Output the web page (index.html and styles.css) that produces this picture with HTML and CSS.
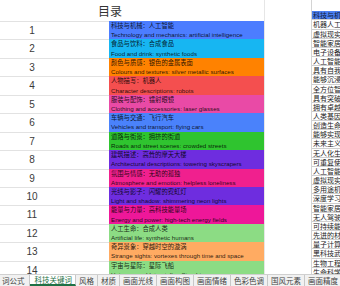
FILE: index.html
```html
<!DOCTYPE html>
<html lang="zh-CN">
<head>
  <meta charset="UTF-8" />
  <title>目录</title>
  <link rel="stylesheet" href="styles.css">
</head>
<body>

  <div class="hoja">
    <!-- Tabla principal -->
    <div class="principal">
      <div class="titulo">目录</div>
      <div class="fila"><div class="num">1</div><div class="celda c1"><span>科技与机械：人工智能</span><span>Technology and mechanics: artificial intelligence</span></div></div>
      <div class="fila"><div class="num">2</div><div class="celda c2"><span>食品与饮料：合成食品</span><span>Food and drink: synthetic foods</span></div></div>
      <div class="fila"><div class="num">3</div><div class="celda c3"><span>颜色与质感：银色的金属表面</span><span>Colours and textures: silver metallic surfaces</span></div></div>
      <div class="fila"><div class="num">4</div><div class="celda c4"><span>人物描写：机器人</span><span>Character descriptions: robots</span></div></div>
      <div class="fila"><div class="num">5</div><div class="celda c5"><span>服装与配饰：镭射眼镜</span><span>Clothing and accessories: laser glasses</span></div></div>
      <div class="fila"><div class="num">6</div><div class="celda c6"><span>车辆与交通：飞行汽车</span><span>Vehicles and transport: flying cars</span></div></div>
      <div class="fila"><div class="num">7</div><div class="celda c7"><span>道路与街景：拥挤的街道</span><span>Roads and street scenes: crowded streets</span></div></div>
      <div class="fila"><div class="num">8</div><div class="celda c8"><span>建筑描述：高耸的摩天大楼</span><span>Architectural descriptions: towering skyscrapers</span></div></div>
      <div class="fila"><div class="num">9</div><div class="celda c9"><span>氛围与情感：无助的孤独</span><span>Atmosphere and emotion: helpless loneliness</span></div></div>
      <div class="fila"><div class="num">10</div><div class="celda c8"><span>光线与影子：闪耀的霓虹灯</span><span>Light and shadow: shimmering neon lights</span></div></div>
      <div class="fila"><div class="num">11</div><div class="celda c11"><span>能量与力量：高科技能量场</span><span>Energy and power: high-tech energy fields</span></div></div>
      <div class="fila"><div class="num">12</div><div class="celda c12"><span>人工生命：合成人类</span><span>Artificial life: synthetic humans</span></div></div>
      <div class="fila"><div class="num">13</div><div class="celda c13"><span>奇异景象：穿越时空的漩涡</span><span>Strange sights: vortexes through time and space</span></div></div>
      <div class="fila"><div class="num">14</div><div class="celda c12"><span>宇宙与星际：星际飞船</span><span>Universe and Interstellar: Starships</span></div></div>
    </div>

    <div class="hueco"></div>

    <!-- Lista lateral -->
    <div class="lateral">
      <div class="item cabecera">科技与机械</div>
      <div class="item">机器人工作</div>
      <div class="item">虚拟现实技</div>
      <div class="item">智能家居系</div>
      <div class="item">电子设备和</div>
      <div class="item">人工智能助</div>
      <div class="item">具有自我意</div>
      <div class="item">能够沉浸式</div>
      <div class="item">全方位智能</div>
      <div class="item">具有突破性</div>
      <div class="item">拥有卓越的</div>
      <div class="item">人类基因改</div>
      <div class="item">创造生命的</div>
      <div class="item">能够实现的</div>
      <div class="item">未来主义的</div>
      <div class="item">无人化生产</div>
      <div class="item">可重复使用</div>
      <div class="item">人工智能的</div>
      <div class="item">虚拟现实的</div>
      <div class="item">多用途机器</div>
      <div class="item">深度学习的</div>
      <div class="item">智能家居的</div>
      <div class="item">无人驾驶的</div>
      <div class="item">可持续能源</div>
      <div class="item">先进的材料</div>
      <div class="item">量子计算机</div>
      <div class="item">黑科技武器</div>
      <div class="item">生物工程的</div>
      <div class="item">生命科学的</div>
    </div>
  </div>

  <!-- Pestañas -->
  <div class="pestanas">
    <div class="tab primera">词公式</div>
    <div class="tab active">科技关键词</div>
    <div class="tab">风格</div>
    <div class="tab">材质</div>
    <div class="tab">画面光线</div>
    <div class="tab">画面构图</div>
    <div class="tab">画面情绪</div>
    <div class="tab">色彩色调</div>
    <div class="tab">国风元素</div>
    <div class="tab">画面精度</div>
    <div class="tab">画面</div>
  </div>

</body>
</html>
```

FILE: styles.css
```css
body {
  margin: 0;
  width: 340px;
  height: 286px;
  overflow: hidden;
  background: white;
  font-family: "Liberation Sans", "Noto Sans CJK SC", sans-serif;
  color: #333;
}

.hoja {
  display: flex;
  height: 274px;
  overflow: hidden;
}

.principal {
  width: 264px;
  flex: none;
}

.titulo {
  height: 21px;
  width: 220px;
  text-align: center;
  font-family: "Noto Sans CJK SC", sans-serif;
  font-size: 12px;
  line-height: 21px;
}

.fila {
  display: flex;
  height: 18.45px;
}

.num {
  width: 109px;
  box-sizing: border-box;
  padding-right: 45px;
  border-top: 1px solid #e2e2e2;
  text-align: center;
  font-size: 10px;
  line-height: 18px;
  color: #3a3a3a;
}

.celda {
  width: 155px;
  padding-left: 2px;
  box-sizing: border-box;
  display: flex;
  flex-direction: column;
  font-size: 6.2px;
  color: rgba(0, 0, 0, 0.85);
  white-space: nowrap;
  overflow: hidden;
}
.celda span {
  height: 9.2px;
  line-height: 9.2px;
}
.celda span:first-child {
  font-family: "Noto Sans CJK SC", sans-serif;
  font-size: 6.3px;
}

.c1 { background-color: #4c7dff; }
.c2 { background-color: #17b6f2; }
.c3 { background-color: #ff8200; }
.c4 { background-color: #f44f4f; }
.c5 { background-color: #e94aa6; }
.c6 { background-color: #4a82fb; }
.c7 { background-color: #2fc42f; }
.c8 { background-color: #6e2ddf; }
.c9 { background-color: #f0208e; }
.c11 { background-color: #ee1799; }
.c12 { background-color: #8cdc84; }
.c13 { background-color: #ffab62; }

.hueco {
  width: 46px;
  flex: none;
  border-left: 1px solid #e6e6e6;
}

.lateral {
  width: 44px;
  flex: none;
  padding-top: 11.3px;
  border-left: 1px solid #d4d4d4;
}

.item {
  height: 9.17px;
  box-sizing: border-box;
  border-bottom: 1px solid #cfcfcf;
  padding-left: 1px;
  font-family: "Noto Sans CJK SC", sans-serif;
  font-size: 7px;
  line-height: 8.2px;
  white-space: nowrap;
  overflow: hidden;
  color: #222;
}
.item.cabecera {
  background-color: #4a7ff2;
  color: #111a33;
}

.pestanas {
  display: flex;
  height: 12px;
  box-sizing: border-box;
  border-top: 1px solid #d0d0d0;
  background-color: #f1f1f1;
  white-space: nowrap;
}

.tab {
  flex: none;
  padding: 0 3px;
  border-right: 1px solid #c8c8c8;
  font-family: "Noto Sans CJK SC", sans-serif;
  font-size: 7.5px;
  line-height: 11px;
  color: #444;
}
.tab.primera {
  margin-left: -1px;
  padding-right: 4px;
}
.tab.active {
  background-color: white;
  color: #1e7145;
  padding: 0 3px 0 5px;
  line-height: 9px;
  border-bottom: 2px solid #1e7145;
}
```
